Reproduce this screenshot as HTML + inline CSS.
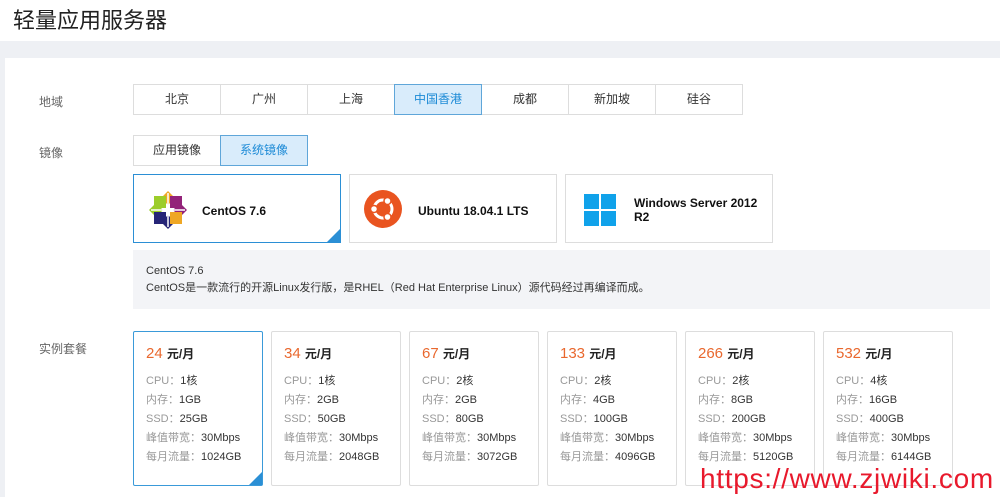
<!DOCTYPE html><html><head><meta charset="utf-8"><style>
*{margin:0;padding:0;box-sizing:border-box}
body{width:1000px;height:497px;overflow:hidden;background:#eef0f4;font-family:"Liberation Sans","Noto Sans CJK SC",sans-serif;font-size:12px;color:#333;position:relative}
.hd{position:absolute;left:0;top:0;width:1000px;height:41px;background:#fff}
.hd h1{position:absolute;left:13px;top:3px;font-size:22px;font-weight:normal;color:#222}
.pn{position:absolute;left:5px;top:58px;width:995px;height:439px;background:#fff}
.lb{position:absolute;left:39px;color:#666}
.seg{position:absolute;display:flex;height:31px}
.seg div{border:1px solid #ddd;margin-left:-1px;text-align:center;line-height:29px;background:#fff;color:#333}
.seg div.on{background:#d9ecfb;border-color:#5fa6d9;color:#1c8ad6;position:relative;z-index:1}
.os{position:absolute;top:174px;width:208px;height:69px;border:1px solid #ddd;background:#fff}
.os.on{border-color:#2b8fd5}
.os b{position:absolute;left:68px;font-size:12px;color:#111}
.tri{position:absolute;right:0;bottom:0;width:0;height:0;border-left:13px solid transparent;border-bottom:13px solid #2b8fd5}
.info{position:absolute;left:133px;top:250px;width:857px;height:59px;background:#f3f4f7;padding:13px 0 0 13px;line-height:17px;font-size:11px;color:#333}
.pc{position:absolute;top:331px;width:130px;height:155px;border:1px solid #ddd;border-radius:2px;background:#fff;padding:13px 0 0 12px}
.pc.on{border-color:#3a9ad9}
.pr{font-size:15px;color:#e9682e;margin-bottom:10px}.pr span{font-size:12px;color:#222;font-weight:bold}
.pc p{font-size:11px;line-height:19px;color:#333}.pc p i{font-style:normal;color:#999}
.wm{position:absolute;left:700px;top:463px;font-size:28px;color:#e8192c;font-family:"Liberation Sans",sans-serif;letter-spacing:0.7px}
</style></head><body>
<div class="hd"><h1>轻量应用服务器</h1></div>
<div class="pn"></div>
<div class="lb" style="top:93px">地域</div>
<div class="seg" style="left:133px;top:84px"><div style="width:88px;margin-left:0">北京</div><div style="width:88px">广州</div><div style="width:88px">上海</div><div class="on" style="width:88px">中国香港</div><div style="width:88px">成都</div><div style="width:88px">新加坡</div><div style="width:88px">硅谷</div></div>
<div class="lb" style="top:144px">镜像</div>
<div class="seg" style="left:133px;top:135px"><div style="width:88px;margin-left:0">应用镜像</div><div class="on" style="width:88px">系统镜像</div></div>
<div class="os on" style="left:133px"><svg style="position:absolute;left:14px;top:15px" width="40" height="40" viewBox="0 0 40 40"><polygon points="20,1 27,8 20,15 13,8" fill="#efa724"/><polygon points="39,20 32,27 25,20 32,13" fill="#932279"/><polygon points="20,39 13,32 20,25 27,32" fill="#262577"/><polygon points="1,20 8,13 15,20 8,27" fill="#9ccd2a"/><rect x="6" y="6" width="12" height="12" fill="#9ccd2a"/><rect x="22" y="6" width="12" height="12" fill="#932279"/><rect x="22" y="22" width="12" height="12" fill="#efa724"/><rect x="6" y="22" width="12" height="12" fill="#262577"/><path d="M20 3V37M3 20H37" stroke="#fff" stroke-width="1.5"/></svg><b style="top:29px">CentOS 7.6</b><div class="tri"></div></div>
<div class="os" style="left:349px"><svg style="position:absolute;left:14px;top:15px" width="38" height="38" viewBox="0 0 38 38"><circle cx="19" cy="19" r="19" fill="#e95420"/><circle cx="19" cy="19" r="9" fill="none" stroke="#fff" stroke-width="3"/><circle cx="10" cy="19" r="3.5" fill="#fff" stroke="#e95420" stroke-width="1.5"/><circle cx="23.5" cy="11" r="3.5" fill="#fff" stroke="#e95420" stroke-width="1.5"/><circle cx="23.5" cy="27" r="3.5" fill="#fff" stroke="#e95420" stroke-width="1.5"/></svg><b style="top:29px">Ubuntu 18.04.1 LTS</b></div>
<div class="os" style="left:565px"><svg style="position:absolute;left:18px;top:18px" width="34" height="34" viewBox="0 0 34 34"><rect x="0" y="1" width="15" height="15" fill="#10a2ea"/><rect x="17" y="1" width="15" height="15" fill="#10a2ea"/><rect x="0" y="18" width="15" height="15" fill="#10a2ea"/><rect x="17" y="18" width="15" height="15" fill="#10a2ea"/></svg><b style="top:21px;line-height:14px">Windows Server 2012<br>R2</b></div>
<div class="info">CentOS 7.6<br>CentOS是一款流行的开源Linux发行版，是RHEL（Red Hat Enterprise Linux）源代码经过再编译而成。</div>
<div class="lb" style="top:340px">实例套餐</div>
<div class="pc on" style="left:133px"><div class="pr">24 <span>元/月</span></div><p><i>CPU：</i>1核</p><p><i>内存：</i>1GB</p><p><i>SSD：</i>25GB</p><p><i>峰值带宽：</i>30Mbps</p><p><i>每月流量：</i>1024GB</p><div class="tri"></div></div>
<div class="pc" style="left:271px"><div class="pr">34 <span>元/月</span></div><p><i>CPU：</i>1核</p><p><i>内存：</i>2GB</p><p><i>SSD：</i>50GB</p><p><i>峰值带宽：</i>30Mbps</p><p><i>每月流量：</i>2048GB</p></div>
<div class="pc" style="left:409px"><div class="pr">67 <span>元/月</span></div><p><i>CPU：</i>2核</p><p><i>内存：</i>2GB</p><p><i>SSD：</i>80GB</p><p><i>峰值带宽：</i>30Mbps</p><p><i>每月流量：</i>3072GB</p></div>
<div class="pc" style="left:547px"><div class="pr">133 <span>元/月</span></div><p><i>CPU：</i>2核</p><p><i>内存：</i>4GB</p><p><i>SSD：</i>100GB</p><p><i>峰值带宽：</i>30Mbps</p><p><i>每月流量：</i>4096GB</p></div>
<div class="pc" style="left:685px"><div class="pr">266 <span>元/月</span></div><p><i>CPU：</i>2核</p><p><i>内存：</i>8GB</p><p><i>SSD：</i>200GB</p><p><i>峰值带宽：</i>30Mbps</p><p><i>每月流量：</i>5120GB</p></div>
<div class="pc" style="left:823px"><div class="pr">532 <span>元/月</span></div><p><i>CPU：</i>4核</p><p><i>内存：</i>16GB</p><p><i>SSD：</i>400GB</p><p><i>峰值带宽：</i>30Mbps</p><p><i>每月流量：</i>6144GB</p></div>
<div class="wm">https://www.zjwiki.com</div>
</body></html>
